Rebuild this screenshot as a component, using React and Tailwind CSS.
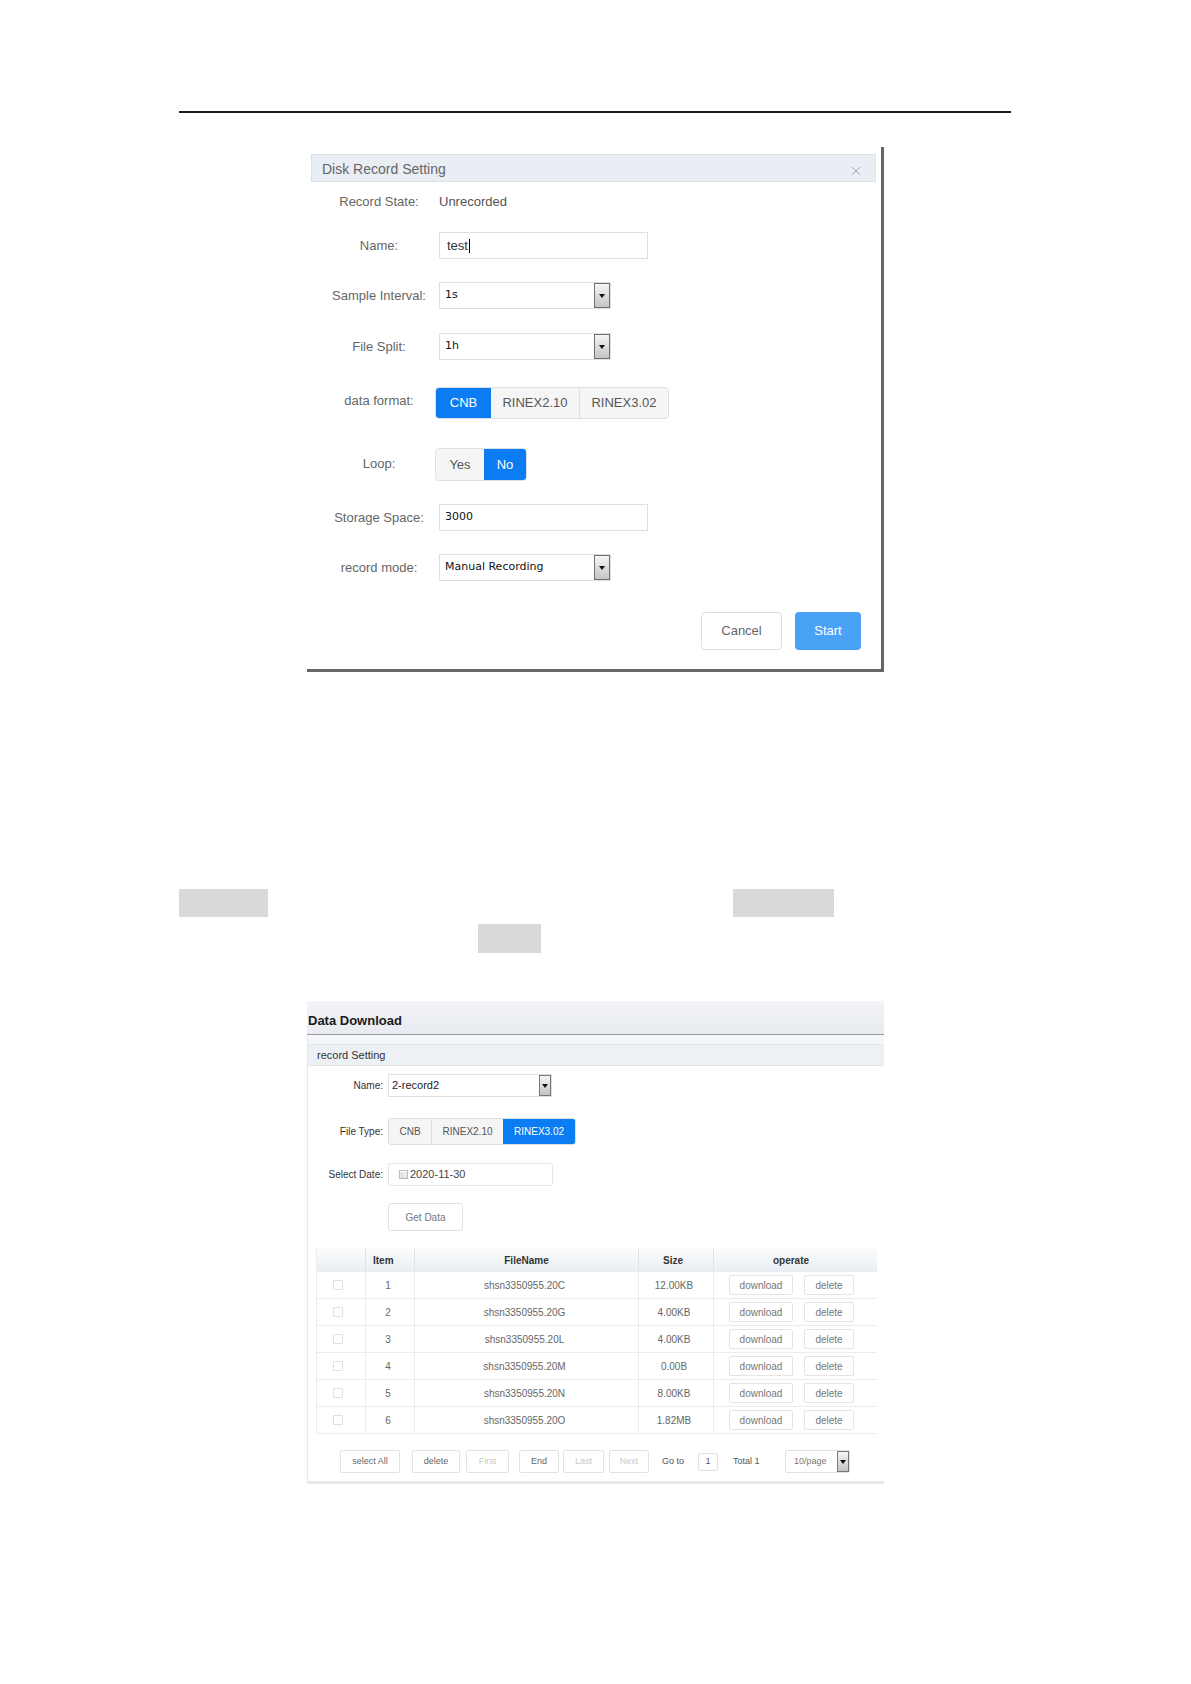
import React from "react";

function Arrow({ small }) {
  return (
    <div
      className={
        small
          ? "flex h-full w-[12px] items-center justify-center border border-[#777] bg-gradient-to-b from-[#f6f6f6] to-[#c4c4c4]"
          : "flex h-full w-[16px] items-center justify-center border border-[#707070] bg-gradient-to-b from-[#f6f6f6] to-[#c4c4c4]"
      }
    >
      <svg width="6" height="4" viewBox="0 0 6 4">
        <path d="M0 0H6L3 4Z" fill="#111" />
      </svg>
    </div>
  );
}

function DRow({ label, className, labelClass, children }) {
  return (
    <div className={"flex items-center " + className}>
      <div className={"w-[120px] shrink-0 text-center text-[13px] text-[#666] " + (labelClass || "")}>{label}</div>
      {children}
    </div>
  );
}

function DSelect({ value }) {
  return (
    <div className="flex h-[27px] w-[172px] border border-[#dcdfe6]">
      <div className="flex flex-1 items-center pl-[5px] font-['DejaVu_Sans',sans-serif] text-[11px] text-[#111]">
        {value}
      </div>
      <Arrow />
    </div>
  );
}

function PLabel({ children }) {
  return <div className="w-[75px] shrink-0 text-right text-[10px] text-[#333]">{children}</div>;
}

const rows = [
  ["1", "shsn3350955.20C", "12.00KB"],
  ["2", "shsn3350955.20G", "4.00KB"],
  ["3", "shsn3350955.20L", "4.00KB"],
  ["4", "shsn3350955.20M", "0.00B"],
  ["5", "shsn3350955.20N", "8.00KB"],
  ["6", "shsn3350955.20O", "1.82MB"],
];

function FBtn({ w, children, muted }) {
  return (
    <div
      className={
        "flex h-[23px] items-center justify-center rounded-[2px] border border-[#e2e2e2] bg-white text-[9px] " +
        (muted ? "text-[#c8c8c8] " : "text-[#666] ") +
        w
      }
    >
      {children}
    </div>
  );
}

export default function App() {
  return (
    <div className="min-h-[1684px] bg-white pt-[111px] font-['Liberation_Sans',Arial,sans-serif]">
      {/* top rule */}
      <div className="ml-[179px] h-[2px] w-[832px] bg-[#1a1a1a]" />

      {/* Disk Record Setting dialog */}
      <div className="ml-[307px] mt-[34px] w-[577px] border-b-[3px] border-r-[3px] border-[#666] bg-white pb-[19px] pt-[7px]">
        <div className="ml-[4px] flex h-[28px] w-[565px] items-center justify-between border border-[#dde2ea] bg-[#e9edf4] pl-[10px] pr-[14px] pt-[3px]">
          <span className="text-[14px] text-[#666]">Disk Record Setting</span>
          <svg width="10" height="10" viewBox="0 0 10 10" className="mt-[2px]">
            <path d="M1 1L9 9M9 1L1 9" stroke="#aaa" strokeWidth="1" />
          </svg>
        </div>

        <div className="pl-[12px]">
          <DRow label="Record State:" className="mt-[10px] h-[20px]">
            <span className="text-[13px] text-[#555]">Unrecorded</span>
          </DRow>

          <DRow label="Name:" className="mt-[20px] h-[27px]">
            <div className="flex h-[27px] w-[209px] items-center border border-[#dcdfe6] pl-[7px] text-[13px] text-[#333]">
              test
              <span className="ml-[1px] inline-block h-[14px] w-[1px] bg-black" />
            </div>
          </DRow>

          <DRow label="Sample Interval:" className="mt-[23px] h-[27px]">
            <DSelect value="1s" />
          </DRow>

          <DRow label="File Split:" className="mt-[24px] h-[27px]">
            <DSelect value="1h" />
          </DRow>

          <DRow label="data format:" className="mt-[27px] h-[32px]" labelClass="pb-[5px]">
            <div className="-ml-[4px] flex h-[32px] overflow-hidden rounded-[4px] border border-[#dcdfe6] text-[13px]">
              <div className="flex w-[55px] items-center justify-center bg-[#0b7cf2] text-white">CNB</div>
              <div className="flex w-[89px] items-center justify-center border-r border-[#dcdfe6] bg-[#f5f5f5] text-[#555]">
                RINEX2.10
              </div>
              <div className="flex w-[88px] items-center justify-center bg-[#f5f5f5] text-[#555]">RINEX3.02</div>
            </div>
          </DRow>

          <DRow label="Loop:" className="mt-[29px] h-[33px]" labelClass="pb-[2px]">
            <div className="-ml-[4px] flex h-[33px] overflow-hidden rounded-[4px] border border-[#dcdfe6] text-[13px]">
              <div className="flex w-[48px] items-center justify-center bg-[#f5f5f5] text-[#555]">Yes</div>
              <div className="flex w-[42px] items-center justify-center bg-[#0b7cf2] text-white">No</div>
            </div>
          </DRow>

          <DRow label="Storage Space:" className="mt-[23px] h-[27px]">
            <div className="flex h-[27px] w-[209px] items-center border border-[#dcdfe6] pl-[5px] font-['DejaVu_Sans',sans-serif] text-[11px] text-[#111]">
              3000
            </div>
          </DRow>

          <DRow label="record mode:" className="mt-[23px] h-[27px]">
            <DSelect value="Manual Recording" />
          </DRow>
        </div>

        <div className="mt-[31px] flex justify-end gap-[13px] pr-[20px]">
          <div className="flex h-[38px] w-[81px] items-center justify-center rounded-[4px] border border-[#dcdfe6] bg-white text-[13px] text-[#666]">
            Cancel
          </div>
          <div className="flex h-[38px] w-[66px] items-center justify-center rounded-[4px] bg-[#4aa2f7] text-[13px] text-white">
            Start
          </div>
        </div>
      </div>

      {/* gray redaction boxes */}
      <div className="mt-[217px] flex">
        <div className="ml-[179px] h-[28px] w-[89px] bg-[#d9d9d9]" />
        <div className="ml-[465px] h-[28px] w-[101px] bg-[#d9d9d9]" />
      </div>
      <div className="ml-[478px] mt-[7px] h-[29px] w-[63px] bg-[#d9d9d9]" />

      {/* Data Download panel */}
      <div className="ml-[307px] mt-[48px] w-[577px]">
        <div className="flex h-[34px] items-center border-b border-[#9c9c9c] bg-gradient-to-b from-[#f3f4f7] to-[#e8ebf1] pl-[1px] pt-[6px] text-[13px] font-bold text-[#1a1a1a]">
          Data Download
        </div>
        <div className="border-b-[3px] border-l border-[#e8e8e8] pb-[8px]">
          <div className="h-[9px] bg-[#f5f6f8]" />
          <div className="flex h-[22px] items-center border-b border-t border-[#e2e5ea] bg-[#edf0f5] pl-[9px] text-[11px] text-[#333]">
            record Setting
          </div>

          <div className="mt-[8px] flex h-[23px] items-center gap-[5px]">
            <PLabel>Name:</PLabel>
            <div className="flex h-[23px] w-[164px] border border-[#dcdfe6]">
              <div className="flex flex-1 items-center pl-[3px] text-[11px] text-[#222]">2-record2</div>
              <Arrow small />
            </div>
          </div>

          <div className="mt-[21px] flex h-[27px] items-center gap-[5px]">
            <PLabel>File Type:</PLabel>
            <div className="flex h-[27px] overflow-hidden rounded-[3px] border border-[#dcdfe6] text-[10px]">
              <div className="flex w-[43px] items-center justify-center border-r border-[#dcdfe6] bg-[#f5f5f5] text-[#555]">
                CNB
              </div>
              <div className="flex w-[71px] items-center justify-center bg-[#f5f5f5] text-[#555]">RINEX2.10</div>
              <div className="flex w-[72px] items-center justify-center bg-[#0b7cf2] text-white">RINEX3.02</div>
            </div>
          </div>

          <div className="mt-[18px] flex h-[23px] items-center gap-[5px]">
            <PLabel>Select Date:</PLabel>
            <div className="flex h-[23px] w-[165px] items-center rounded-[2px] border border-[#e4e7ed] pl-[10px] text-[11px] text-[#444]">
              <svg width="9" height="9" viewBox="0 0 9 9" className="mr-[2px]">
                <rect x="0.5" y="0.5" width="8" height="8" fill="none" stroke="#bbb" />
                <path d="M0.5 3H8.5M0.5 5H8.5M0.5 7H8.5M3 3V8.5" stroke="#ccc" strokeWidth="0.8" />
              </svg>
              2020-11-30
            </div>
          </div>

          <div className="ml-[80px] mt-[17px] flex h-[28px] w-[75px] items-center justify-center rounded-[3px] border border-[#e2e2e2] text-[10px] text-[#777]">
            Get Data
          </div>

          {/* table */}
          <div className="ml-[8px] mt-[17px] w-[561px] border-l border-[#ececec] text-[10px]">
            <div className="grid h-[24px] grid-cols-[49px_49px_224px_75px_164px] bg-gradient-to-b from-[#fbfcfd] to-[#e9eef4] font-bold text-[#333]">
              <div className="border-r border-[#e2e2e2]" />
              <div className="flex items-center border-r border-[#e2e2e2] pl-[7px]">Item</div>
              <div className="flex items-center justify-center border-r border-[#e2e2e2]">FileName</div>
              <div className="flex items-center justify-center border-r border-[#e2e2e2] pr-[6px]">Size</div>
              <div className="flex items-center justify-center pr-[10px]">operate</div>
            </div>
            {rows.map(([n, f, s]) => (
              <div
                key={n}
                className="grid h-[27px] grid-cols-[49px_49px_224px_75px_164px] border-b border-[#ececec] text-[#666]"
              >
                <div className="flex items-center justify-center border-r border-[#ececec] pr-[6px]">
                  <div className="h-[10px] w-[10px] rounded-[1px] border border-[#e0e0e0]" />
                </div>
                <div className="flex items-center justify-center border-r border-[#ececec] pr-[4px]">{n}</div>
                <div className="flex items-center justify-center border-r border-[#ececec] pr-[4px]">{f}</div>
                <div className="flex items-center justify-center border-r border-[#ececec] pr-[4px]">{s}</div>
                <div className="flex items-center gap-[11px] pl-[15px]">
                  <div className="flex h-[20px] w-[64px] items-center justify-center rounded-[2px] border border-[#e4e4e4] text-[#777]">
                    download
                  </div>
                  <div className="flex h-[20px] w-[50px] items-center justify-center rounded-[2px] border border-[#e4e4e4] text-[#777]">
                    delete
                  </div>
                </div>
              </div>
            ))}
          </div>

          {/* pager */}
          <div className="ml-[32px] mt-[16px] flex h-[23px] items-center text-[9px] text-[#555]">
            <FBtn w="w-[60px]">select All</FBtn>
            <div className="ml-[12px]" />
            <FBtn w="w-[48px]">delete</FBtn>
            <div className="ml-[6px]" />
            <FBtn w="w-[43px]" muted>
              First
            </FBtn>
            <div className="ml-[10px]" />
            <FBtn w="w-[40px]">End</FBtn>
            <div className="ml-[4px]" />
            <FBtn w="w-[41px]" muted>
              Last
            </FBtn>
            <div className="ml-[5px]" />
            <FBtn w="w-[40px]" muted>
              Next
            </FBtn>
            <span className="ml-[13px] w-[25px]">Go to</span>
            <div className="ml-[11px] flex h-[18px] w-[20px] items-center justify-center rounded-[2px] border border-[#e2e2e2]">
              1
            </div>
            <span className="ml-[15px] w-[30px]">Total 1</span>
            <div className="ml-[22px] flex h-[23px] w-[65px] rounded-[2px] border border-[#e2e2e2]">
              <div className="flex flex-1 items-center pl-[8px] text-[#777]">10/page</div>
              <Arrow small />
            </div>
          </div>
        </div>
      </div>
    </div>
  );
}
